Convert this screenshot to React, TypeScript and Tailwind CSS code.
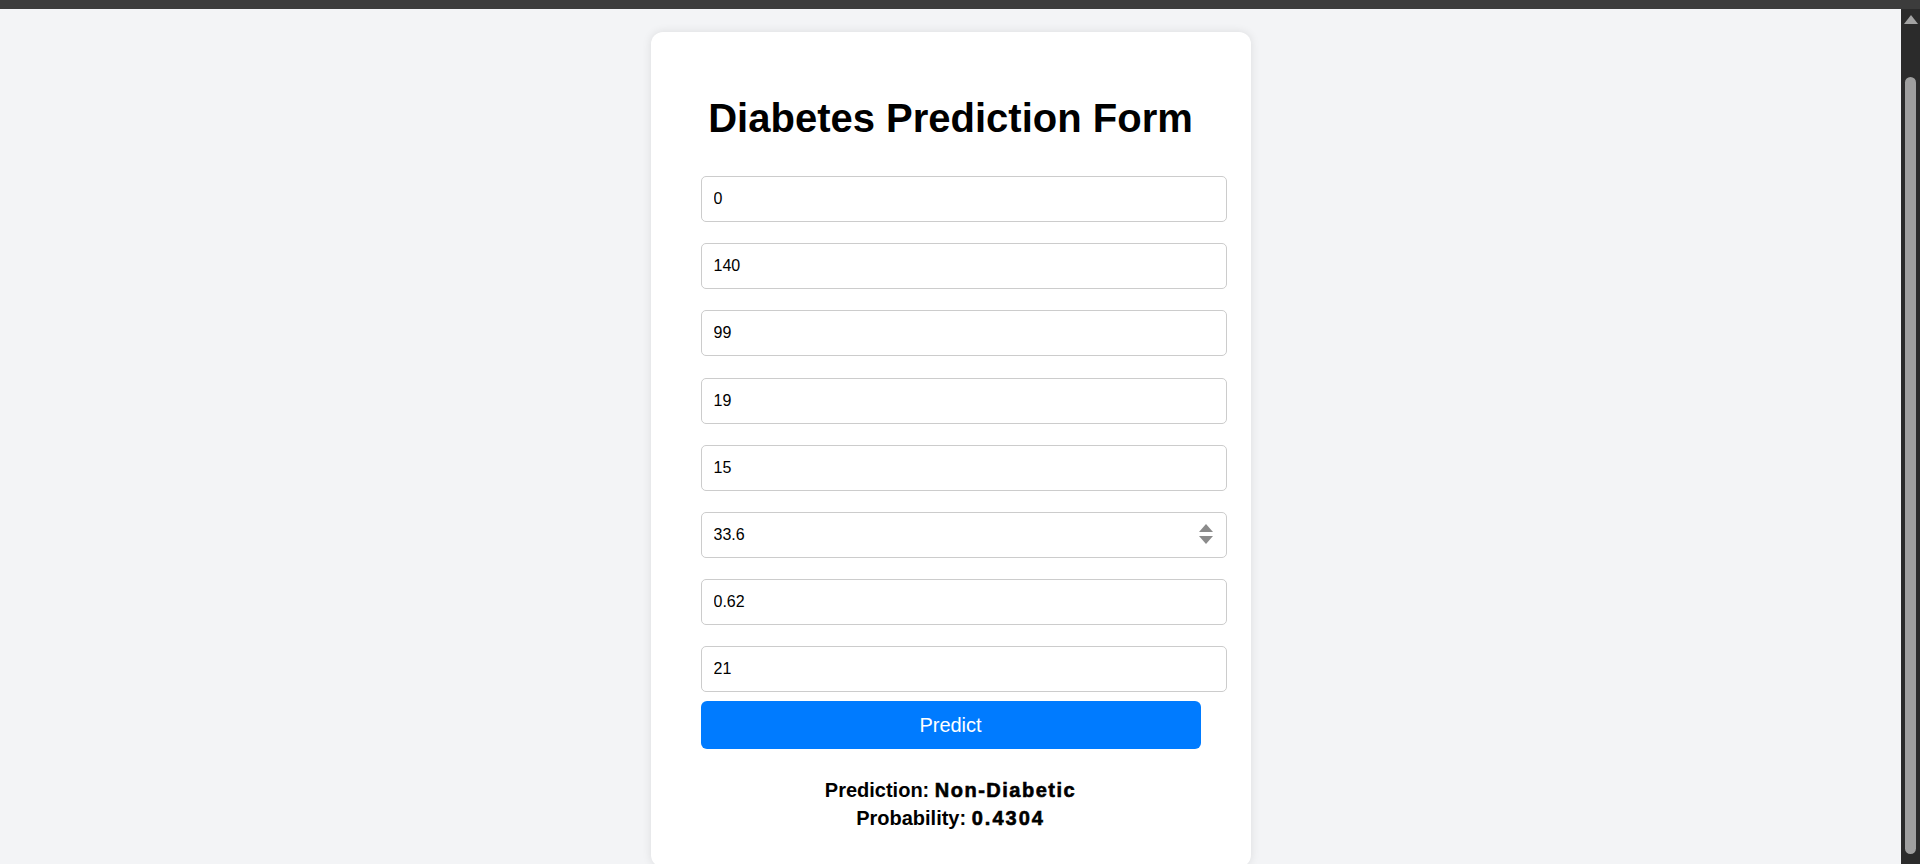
const values = ["0", "140", "99", "19", "15", "33.6", "0.62", "21"];

const Spinner = () => (
    <svg width="14" height="21" viewBox="0 0 14 21" className="absolute right-[14px] top-[12px]">
        <polygon points="0,8 7,0 14,8" fill="#8b8b8b" />
        <polygon points="0,12 14,12 7,20" fill="#8b8b8b" />
    </svg>
);

const Scrollbar = () => (
    <div className="flex w-[19px] flex-col items-center bg-[#2b2b2b]">
        <svg width="14" height="9" viewBox="0 0 14 9" className="mt-[6px]">
            <polygon points="0,9 7,0 14,9" fill="#a3a3a3" />
        </svg>
        <div className="mt-[53px] h-[777px] w-[11px] rounded-[6px] bg-[#9f9f9f]" />
    </div>
);

export default function App() {
    return (
        <div className="flex h-[864px] flex-col overflow-hidden font-['Liberation_Sans',Arial,sans-serif] text-black">
            <div className="h-[9px] bg-[#3c3c3c]" />
            <div className="flex flex-1 overflow-hidden">
                <main className="flex flex-1 justify-center bg-[#f3f4f6]">
                    <div className="mt-[23px] h-[835px] w-[600px] rounded-xl bg-white px-[50px] pt-[63px] shadow-[0_0_10px_rgba(0,0,0,0.1)]">
                        <h1 className="text-center text-[40px] font-bold leading-[46px]">
                            Diabetes Prediction Form
                        </h1>

                        <form className="mt-[35px] flex flex-col" onSubmit={(e) => e.preventDefault()}>
                            <div className="flex flex-col gap-[21.2px]">
                                {values.map((v, i) => (
                                    <div key={i} className="relative w-[526px]">
                                        <input
                                            type="text"
                                            defaultValue={v}
                                            className="box-border h-[46px] w-full rounded-[5px] border border-[#cccccc] bg-white px-3 text-[16px] text-black outline-none"
                                        />
                                        {v === "33.6" && <Spinner />}
                                    </div>
                                ))}
                            </div>

                            <button
                                type="submit"
                                className="mt-[9px] h-[48px] w-[500px] rounded-[6px] bg-[#007bff] text-[20px] text-white"
                            >
                                Predict
                            </button>
                        </form>

                        <div className="mt-[27px] text-center text-[20px] font-bold leading-[28px]">
                            <div>
                                Prediction:{" "}
                                <span className="tracking-[1.5px] [-webkit-text-stroke:0.6px_black]">Non-Diabetic</span>
                            </div>
                            <div>
                                Probability:{" "}
                                <span className="tracking-[2px] [-webkit-text-stroke:0.6px_black]">0.4304</span>
                            </div>
                        </div>
                    </div>
                </main>
                <Scrollbar />
            </div>
        </div>
    );
}
